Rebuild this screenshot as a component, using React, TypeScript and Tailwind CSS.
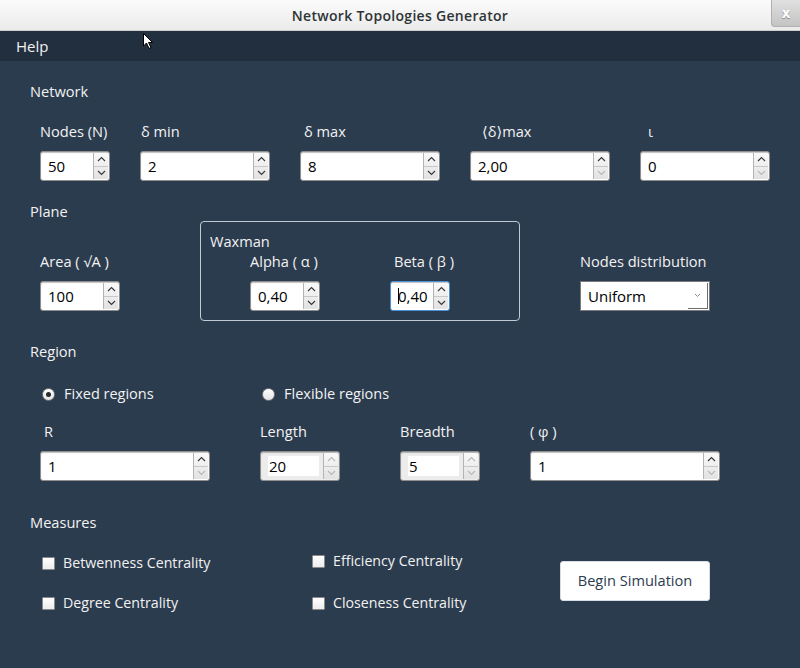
import React from "react";

const FONT = { fontFamily: '"Open Sans", "DejaVu Sans", sans-serif' };

function Chevron({ dir, disabled }: { dir: "up" | "down"; disabled?: boolean }) {
  const c = disabled ? "#b8b8b8" : "#3a3a3a";
  return (
    <svg width="9" height="6" viewBox="0 0 9 6">
      {dir === "up" ? (
        <path d="M1 5 L4.5 1.5 L8 5" fill="none" stroke={c} strokeWidth="1.2" />
      ) : (
        <path d="M1 1 L4.5 4.5 L8 1" fill="none" stroke={c} strokeWidth="1.2" />
      )}
    </svg>
  );
}

function Spin({
  w,
  value,
  upDisabled,
  downDisabled,
  disabled,
  focused,
}: {
  w: number;
  value: string;
  upDisabled?: boolean;
  downDisabled?: boolean;
  disabled?: boolean;
  focused?: boolean;
}) {
  return (
    <div
      className={`flex h-[30px] rounded-[3px] border ${
        focused ? "border-[#4a90d9]" : "border-[#8e8e8e]"
      } ${disabled ? "bg-[#ececec]" : "bg-white"} shadow-[inset_0_1px_1px_rgba(0,0,0,0.25)] overflow-hidden`}
      style={{ width: w }}
    >
      <div className="flex-1 flex items-center pl-[7px] pr-[4px] py-[4px]">
        {disabled ? (
          <div className="bg-white h-full flex items-center pl-[1px] flex-1 text-[15px] text-black">{value}</div>
        ) : (
          <div className="flex items-center text-[15px] text-black">
            {focused && <span className="inline-block w-[1px] h-[16px] bg-black mr-[-1px]" />}
            {value}
          </div>
        )}
      </div>
      <div className="w-[15px] flex flex-col border-l border-[#b4b4b4] bg-gradient-to-b from-[#fafafa] to-[#e2e2e2] mr-[1px] my-[1px] rounded-r-[2px]">
        <div className="flex-1 flex items-center justify-center border-b border-[#c8c8c8]">
          <Chevron dir="up" disabled={disabled || upDisabled} />
        </div>
        <div className="flex-1 flex items-center justify-center">
          <Chevron dir="down" disabled={disabled || downDisabled} />
        </div>
      </div>
    </div>
  );
}

function Label({ children, pl = 0 }: { children: React.ReactNode; pl?: number }) {
  return (
    <div className="h-[20px] leading-[20px] text-[14.6px] text-[#f2f2f2] whitespace-nowrap" style={{ paddingLeft: pl }}>
      {children}
    </div>
  );
}

function Field({
  label,
  pl,
  children,
}: {
  label: React.ReactNode;
  pl?: number;
  children: React.ReactNode;
}) {
  return (
    <div className="flex flex-col">
      <Label pl={pl}>{label}</Label>
      <div className="mt-[10px]">{children}</div>
    </div>
  );
}

function Check({ label }: { label: string }) {
  return (
    <div className="flex items-center h-[20px]">
      <div className="w-[13px] h-[13px] ml-[12px] border border-[#8a8a8a] bg-gradient-to-b from-white to-[#ececec] rounded-[1px]" />
      <span className="ml-[8px] text-[14.2px] text-[#f2f2f2] whitespace-nowrap">{label}</span>
    </div>
  );
}

function Radio({ label, checked }: { label: string; checked?: boolean }) {
  return (
    <div className="flex items-center h-[20px]">
      <div className="w-[13px] h-[13px] rounded-full border border-[#7a7a7a] bg-gradient-to-b from-white to-[#e4e4e4] flex items-center justify-center">
        {checked && <div className="w-[5px] h-[5px] rounded-full bg-[#2a2a2a]" />}
      </div>
      <span className="ml-[9px] text-[14.5px] text-[#f2f2f2] whitespace-nowrap">{label}</span>
    </div>
  );
}

export default function App() {
  return (
    <div className="w-[800px] h-[668px] overflow-hidden relative flex flex-col" style={FONT}>
      {/* Title bar */}
      <div className="relative h-[31px] flex items-center justify-center bg-gradient-to-b from-[#fbfbfb] to-[#ebebeb] border-b border-[#cfcfcf]">
        <span className="text-[14px] font-semibold text-[#2e3436] tracking-[0.3px]">Network Topologies Generator</span>
        <div className="absolute right-0 top-0 w-[29px] h-[27px] rounded-bl-[4px] border-l border-b border-[#b0b0b0] bg-gradient-to-b from-[#e0e0e0] to-[#c4c4c4] flex items-center justify-center">
          <span className="text-[14px] font-bold text-white leading-none [text-shadow:0_1px_1px_rgba(0,0,0,0.35)]">x</span>
        </div>
      </div>
      {/* Menu bar */}
      <div className="h-[30px] bg-[#222f3e] flex items-center pl-[16px]">
        <span className="text-[15px] text-[#f2f2f2]">Help</span>
      </div>
      {/* Content */}
      <div className="flex-1 bg-[#2c3c4f] px-[30px] pt-[20px]">
        <Label>Network</Label>
        <div className="flex gap-[30px] mt-[20px] pl-[10px]">
          <Field label="Nodes (N)">
            <Spin w={70} value="50" />
          </Field>
          <Field label="δ min" pl={1}>
            <Spin w={130} value="2" />
          </Field>
          <Field label="δ max" pl={4}>
            <Spin w={140} value="8" />
          </Field>
          <Field label="⟨δ⟩max" pl={12}>
            <Spin w={140} value="2,00" downDisabled />
          </Field>
          <Field label="ι" pl={8}>
            <Spin w={130} value="0" downDisabled />
          </Field>
        </div>

        <div className="mt-[20px]">
          <Label>Plane</Label>
        </div>
        <div className="flex items-start pl-[10px]">
          <div className="pt-[30px]">
            <Field label="Area ( √A )">
              <Spin w={80} value="100" />
            </Field>
          </div>
          <div className="ml-[80px] w-[320px] h-[100px] rounded-[4px] border border-[#c4cad2] pl-[9px] pt-[9px]">
            <Label>Waxman</Label>
            <div className="flex pl-[40px] gap-[70px]">
              <Field label="Alpha ( α )">
                <Spin w={70} value="0,40" />
              </Field>
              <Field label="Beta ( β )" pl={4}>
                <Spin w={60} value="0,40" focused />
              </Field>
            </div>
          </div>
          <div className="ml-[60px] pt-[30px]">
            <Field label="Nodes distribution">
              <div className="relative w-[130px] h-[30px] bg-white border border-[#7c7c7c] flex items-center pl-[7px]">
                <span className="text-[15px] text-black">Uniform</span>
                <div className="absolute right-[1px] bottom-[1px] w-[20px] h-[26px] border-r border-b border-[#6e6e6e] flex items-center justify-center">
                  <svg width="7" height="5" viewBox="0 0 7 5">
                    <path d="M1 1 L3.5 3.5 L6 1" fill="none" stroke="#8a8a8a" strokeWidth="1" />
                  </svg>
                </div>
              </div>
            </Field>
          </div>
        </div>

        <div className="mt-[20px]">
          <Label>Region</Label>
        </div>
        <div className="flex mt-[23px] pl-[12px]">
          <div className="w-[220px]">
            <Radio label="Fixed regions" checked />
          </div>
          <Radio label="Flexible regions" />
        </div>
        <div className="flex mt-[17px] pl-[10px]">
          <Field label="R" pl={4}>
            <Spin w={170} value="1" downDisabled />
          </Field>
          <div className="ml-[50px]">
            <Field label="Length">
              <Spin w={80} value="20" disabled />
            </Field>
          </div>
          <div className="ml-[60px]">
            <Field label="Breadth">
              <Spin w={80} value="5" disabled />
            </Field>
          </div>
          <div className="ml-[50px]">
            <Field label="( φ )">
              <Spin w={190} value="1" downDisabled />
            </Field>
          </div>
        </div>

        <div className="mt-[31px]">
          <Label>Measures</Label>
        </div>
        <div className="flex mt-[21px]">
          <div className="w-[270px] flex flex-col gap-[20px]">
            <Check label="Betwenness Centrality" />
            <Check label="Degree Centrality" />
          </div>
          <div className="w-[260px] flex flex-col">
            <div className="mt-[-2px]">
              <Check label="Efficiency Centrality" />
            </div>
            <div className="mt-[22px]">
              <Check label="Closeness Centrality" />
            </div>
          </div>
          <div className="mt-[8px]">
            <div className="w-[150px] h-[40px] bg-white rounded-[3px] border border-[#d8dde3] flex items-center justify-center">
              <span className="text-[14.6px] text-[#2c3c4f]">Begin Simulation</span>
            </div>
          </div>
        </div>
      </div>

      {/* Mouse cursor */}
      <svg className="absolute left-[143px] top-[33px]" width="11" height="17" viewBox="0 0 11 17">
        <path d="M0.5 0.5 L0.5 13 L3.5 10 L6 15.5 L8 14.5 L5.5 9.5 L9.5 9.5 Z" fill="#fff" stroke="#000" strokeWidth="1" />
      </svg>
    </div>
  );
}
